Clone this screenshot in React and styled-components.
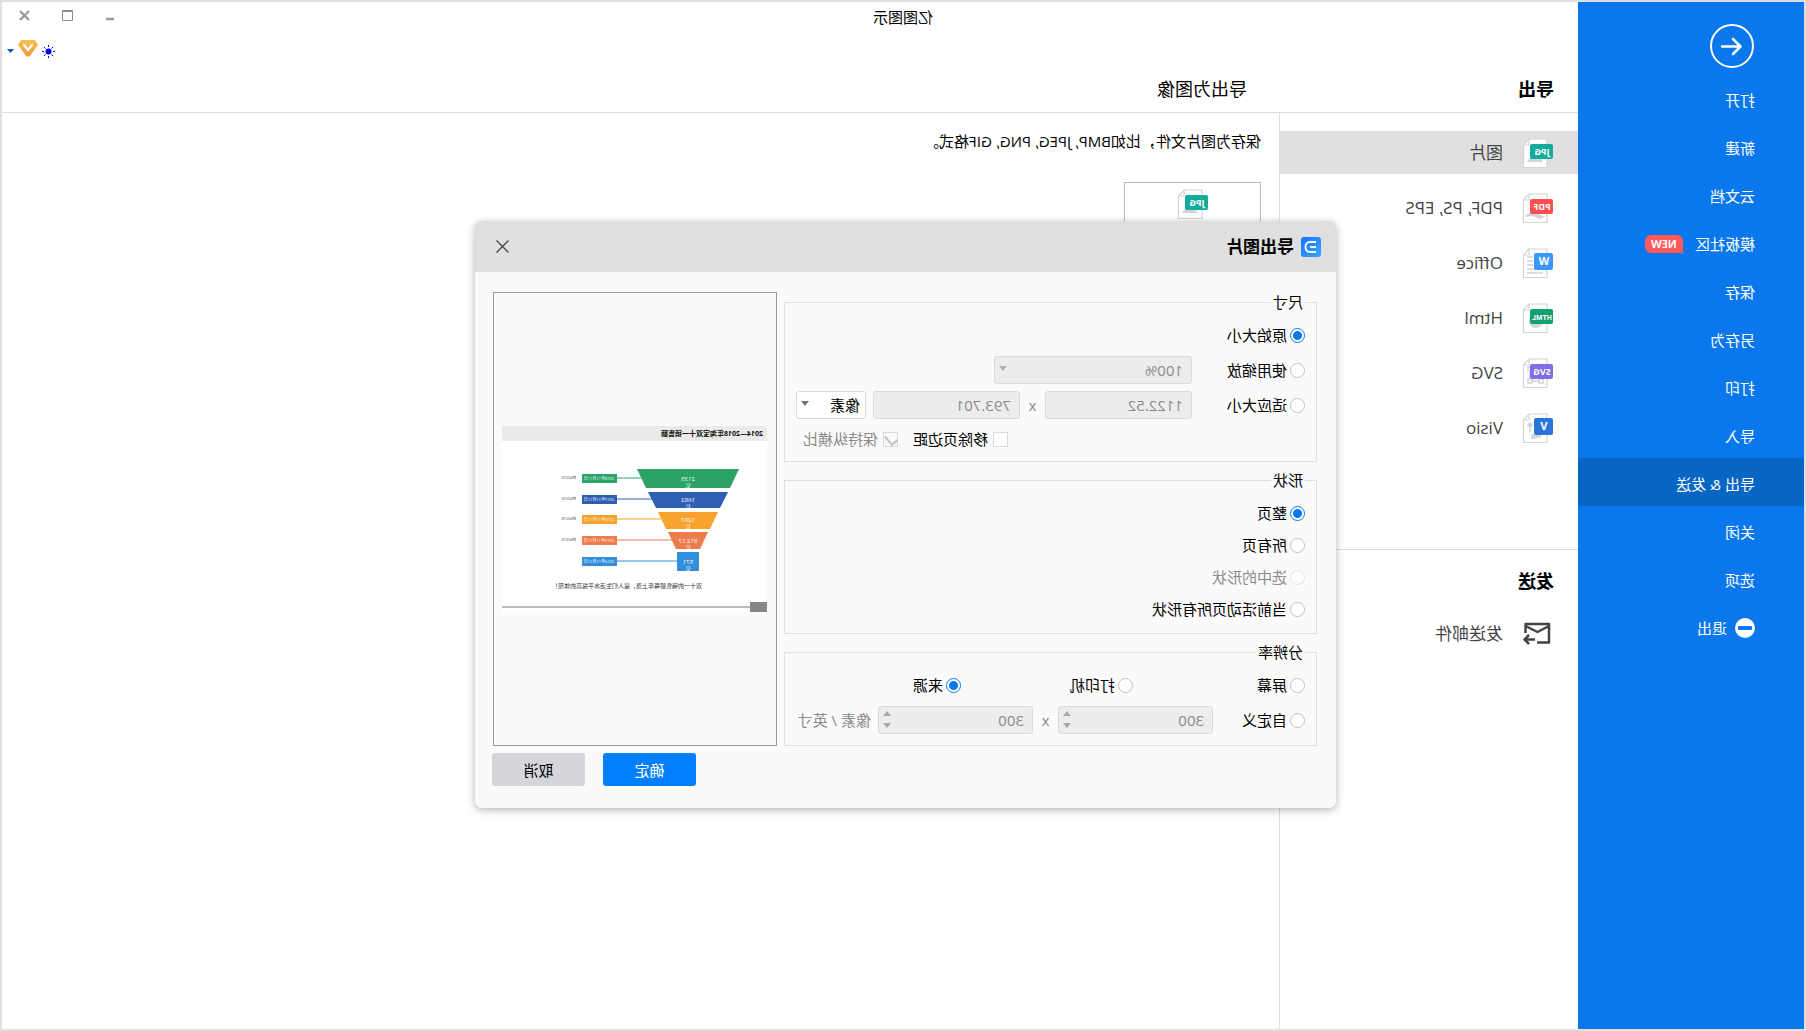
import React, { useState } from "react";
import styled, { createGlobalStyle, css } from "styled-components";

const navItems = [
  { name: "打开" },
  { name: "新建" },
  { name: "云文档" },
  { name: "模板社区", badge: "NEW" },
  { name: "保存" },
  { name: "另存为" },
  { name: "打印" },
  { name: "导入" },
  { name: "导出 & 发送", active: true },
  { name: "关闭" },
  { name: "选项" },
  { name: "退出", exit: true },
];

const exportTypes = [
  { name: "图片", tag: "JPG", color: "#14ab9c", active: true },
  { name: "PDF, PS, EPS", tag: "PDF", color: "#ff4d52" },
  { name: "Office", tag: "W", color: "#3b97ff" },
  { name: "Html", tag: "HTML", color: "#12a073" },
  { name: "SVG", tag: "SVG", color: "#7f6ee6" },
  { name: "Visio", tag: "V", color: "#2b75d9" },
];

const funnel = [
  { value: "2135", date: "2018年11月11日", rate: "增长26.9%", color: "#2ba368", points: "28,43 130,43 121,62 37,62", y: 52, to: 126 },
  { value: "1682", date: "2017年11月11日", rate: "增长39.3%", color: "#2f5fb5", points: "39,66 119,66 111,82 47,82", y: 73, to: 115 },
  { value: "1207", date: "2016年11月11日", rate: "增长32.3%", color: "#f8a22f", points: "49,86 109,86 101,103 57,103", y: 93, to: 106 },
  { value: "912.17", date: "2015年11月11日", rate: "增长59.7%", color: "#ef7c4c", points: "59,106 99,106 91,123 67,123", y: 114, to: 95 },
  { value: "571", date: "2014年11月11日", rate: "", color: "#338fdb", points: "68,126 90,126 90,145 68,145", y: 135, to: 90 },
];

const docInner = {
  JPG: <path d="M10 24l6-8 4 4 2-2 4 6z" fill="#d4d4d4" />,
  PDF: <path d="M11 24c4-1 7-6 9-9 1 5 3 7 7 8-5-2-9-1-13 2z" fill="#d4d4d4" stroke="#d4d4d4" strokeWidth="2" />,
  W: <path d="M20 9h6M20 13h6M20 17h6M10 21h16M10 25h16" stroke="#d4d4d4" strokeWidth="1.6" />,
  HTML: <circle cx="17" cy="18" r="7" fill="#d4d4d4" />,
  SVG: (
    <g fill="none" stroke="#d4d4d4" strokeWidth="1.4">
      <path d="M12 11h11v12H12z" />
      <path d="M10 21h4v4h-4zM21 21h4v4h-4zM21 9h4v4h-4z" fill="#fff" />
    </g>
  ),
  V: <path d="M13 20v4h7M23 11v8M21 12l2-2 2 2-2 2zM17 22h4v3h-4z" fill="#d4d4d4" stroke="#d4d4d4" strokeWidth="1.6" />,
};

const DocIcon = ({ tag, color }) => {
  const short = tag.length === 1;
  return (
    <svg width="31" height="30" viewBox="0 0 31 30">
      <path d="M6 1h18l5.500 6v22.500H6z" fill="#fff" stroke="#d4d4d4" strokeWidth="1.2" />
      <path d="M24 1v6h5.500" fill="none" stroke="#d4d4d4" strokeWidth="1.2" />
      {docInner[tag]}
      <rect x="0" y={short ? 5 : 6} width={short ? 19 : 23} height={short ? 17 : 15} rx="2" fill={color} />
      <text
        x={short ? 9 : 11}
        y="17"
        textAnchor="middle"
        fill="#fff"
        fontWeight="700"
        fontSize={short ? 11 : tag.length === 4 ? 7 : 9}
      >
        {tag}
      </text>
    </svg>
  );
};

const FunnelPreview = () => (
  <svg viewBox="0 0 265 187" width="100%">
    <rect width="265" height="187" fill="#fff" />
    <rect width="265" height="15" fill="#eaeaea" />
    <text x="4" y="10" fontSize="7" fontWeight="700" fill="#111">
      2014—2018年淘宝双十一销售额
    </text>
    {funnel.map((item) => (
      <g key={item.value}>
        <path d={`M${item.to} ${item.y}H152`} stroke={item.color} strokeWidth="1" />
        <polygon points={item.points} fill={item.color} />
        <text x="79" y={item.y + 3} fontSize="6" fill="#fff" textAnchor="middle">
          {item.value}
        </text>
        <text x="79" y={item.y + 9} fontSize="5" fill="#fff" textAnchor="middle">
          亿
        </text>
        <rect x="150" y={item.y - 4} width="35" height="9" fill={item.color} />
        <text x="168" y={item.y + 2} fontSize="4" fill="#fff" textAnchor="middle">
          {item.date}
        </text>
        <text x="191" y={item.y + 1} fontSize="3" fill="#333">
          {item.rate}
        </text>
      </g>
    ))}
    <text x="65" y="162" fontSize="6" fill="#333">
      双十一的销售额每年上涨，是人们生活水平提高的体现！
    </text>
    <path d="M17 181h248" stroke="#bcbcbc" strokeWidth="2" />
    <rect y="176" width="17" height="10" fill="#868686" />
  </svg>
);

const Choice = ({ type = "radio", group, label, width, checked, disabled, onChange }) => (
  <ChoiceLabel $width={width} $disabled={disabled} $box={type === "checkbox"}>
    <Mark
      type={type}
      name={group}
      checked={checked}
      disabled={disabled}
      onChange={onChange}
    />
    {label}
  </ChoiceLabel>
);

const Spinner = ({ label }) => (
  <SpinBox>
    <SpinInput aria-label={label} defaultValue="300" disabled />
    <SpinButtons>
      <SpinButton aria-label="增加" disabled>
        <svg width="8" height="5"><path d="M4 0l4 5H0z" fill="#a8a8a8" /></svg>
      </SpinButton>
      <SpinButton aria-label="减少" disabled>
        <svg width="8" height="5"><path d="M4 5l4-5H0z" fill="#a8a8a8" /></svg>
      </SpinButton>
    </SpinButtons>
  </SpinBox>
);

const App = () => {
  const [size, setSize] = useState("原始大小");
  const [shape, setShape] = useState("整页");
  const [dpi, setDpi] = useState("来源");
  const [noMargin, setNoMargin] = useState(false);

  const sizeChoice = (name) => (
    <Choice group="size" label={name} width={113} checked={size === name} onChange={() => setSize(name)} />
  );
  const dpiChoice = (name, width) => (
    <Choice group="dpi" label={name} width={width} checked={dpi === name} onChange={() => setDpi(name)} />
  );

  return (
    <Window>
      <GlobalStyle />
      <Sidebar>
        <BackButton aria-label="返回">
          <svg width="44" height="44" viewBox="0 0 44 44" fill="none" stroke="#fff">
            <circle cx="22" cy="22" r="21" strokeWidth="2" />
            <path d="M32 22.500H13.500M21 15l-7.500 7.500L21 30" strokeWidth="2.500" strokeLinecap="round" strokeLinejoin="round" />
          </svg>
        </BackButton>
        {navItems.map((item) => (
          <NavItem key={item.name} $active={item.active}>
            {item.exit && (
              <svg width="20" height="20" viewBox="0 0 20 20">
                <circle cx="10" cy="10" r="10" fill="#fff" />
                <rect x="3" y="8" width="14" height="4" rx="1" fill="#0a78ec" />
              </svg>
            )}
            {item.name}
            {item.badge && <Badge>{item.badge}</Badge>}
          </NavItem>
        ))}
      </Sidebar>

      <Main>
        <TitleBar>
          <AppTitle>亿图图示</AppTitle>
          <Controls>
            <ControlButton aria-label="最小化">
              <svg width="11" height="11"><path d="M2 9h8" stroke="#999" strokeWidth="2.500" /></svg>
            </ControlButton>
            <ControlButton aria-label="最大化">
              <svg width="11" height="11">
                <path d="M.5 .5h10v10H.5zM0 1.500h11" fill="none" stroke="#8c8c8c" />
              </svg>
            </ControlButton>
            <ControlButton aria-label="关闭窗口">
              <svg width="11" height="11"><path d="M1 1l9 9M10 1l-9 9" stroke="#999" strokeWidth="2.200" /></svg>
            </ControlButton>
          </Controls>
        </TitleBar>
        <Account>
          <Sun width="13" height="13" viewBox="0 0 13 13">
            <circle cx="6.500" cy="6.500" r="3" fill="#00f" />
            <path d="M6.500 0v2M6.500 11v2M0 6.500h2M11 6.500h2M2 2l1.500 1.500M9.500 9.500L11 11M11 2L9.500 3.500M3.500 9.500L2 11" stroke="#00f" />
          </Sun>
          <svg width="20" height="17" viewBox="0 0 20 17">
            <defs>
              <linearGradient id="vip" x2="0" y2="1">
                <stop stopColor="#fbc04c" />
                <stop offset="1" stopColor="#e79c3f" />
              </linearGradient>
            </defs>
            <path d="M3 0h14l3 5-8.500 11.500h-3L0 5z" fill="url(#vip)" />
            <path d="M6 5l4 5 4-5" fill="none" stroke="#fff" strokeWidth="2.200" strokeLinecap="round" />
          </svg>
          <Caret width="7" height="4"><path d="M0 0h7L3.500 4z" fill="#0a5cb0" /></Caret>
        </Account>
        <Headings>
          <SideHeading>导出</SideHeading>
          <PageHeading>导出为图像</PageHeading>
        </Headings>
        <Columns>
          <TypePanel>
            <TypeList>
              {exportTypes.map((item) => (
                <TypeItem key={item.name} $active={item.active}>
                  <DocIcon tag={item.tag} color={item.color} />
                  {item.name}
                </TypeItem>
              ))}
            </TypeList>
            <SendSection>
              <SendHeading>发送</SendHeading>
              <TypeItem>
                <svg width="31" height="30" viewBox="0 0 31 30" fill="none" stroke="#444" strokeWidth="2.500" strokeLinejoin="round">
                  <path d="M16 23.500H4V5h23.500v9" />
                  <path d="M4 7l11.500 6 12-6" />
                  <path d="M18 20.500h10M24 16l4.500 4.500L24 25" />
                </svg>
                发送邮件
              </TypeItem>
            </SendSection>
          </TypePanel>
          <Content>
            <Hint>保存为图片文件，比如BMP, JPEG, PNG, GIF格式。</Hint>
            <FormatCard aria-label="JPG">
              <DocIcon tag="JPG" color="#14ab9c" />
            </FormatCard>
          </Content>
        </Columns>
      </Main>

      <Overlay>
        <Dialog role="dialog" aria-label="导出图片">
          <DialogHeader>
            <svg width="20" height="20" viewBox="0 0 20 20">
              <defs>
                <linearGradient id="logo" x1="1" x2="0" y2="1">
                  <stop stopColor="#1673ff" />
                  <stop offset="1" stopColor="#3ba4ff" />
                </linearGradient>
              </defs>
              <rect width="20" height="20" rx="3" fill="url(#logo)" />
              <path d="M5 5h6c6 0 6 10 0 10H5M5 10h6" fill="none" stroke="#fff" strokeWidth="2" />
            </svg>
            <DialogTitle>导出图片</DialogTitle>
            <CloseButton aria-label="关闭">
              <svg width="13" height="13"><path d="M.5 .5l12 12M12.500 .5l-12 12" stroke="#444" strokeWidth="1.300" /></svg>
            </CloseButton>
          </DialogHeader>
          <DialogBody>
            <Groups>
              <Group $gap={7} $bottom={7}>
                <legend>尺寸</legend>
                <Row>{sizeChoice("原始大小")}</Row>
                <Row>
                  {sizeChoice("使用缩放")}
                  <SelectBox $width={198} $disabled>
                    <select aria-label="缩放" disabled>
                      <option>100%</option>
                    </select>
                  </SelectBox>
                </Row>
                <Row>
                  {sizeChoice("适应大小")}
                  <Field aria-label="宽度" defaultValue="1122.52" disabled />
                  <Times>x</Times>
                  <Field aria-label="高度" defaultValue="793.701" disabled />
                  <UnitBox $width={70}>
                    <select aria-label="单位">
                      <option>像素</option>
                    </select>
                  </UnitBox>
                </Row>
                <CheckRow>
                  <Choice type="checkbox" label="移除页边距" checked={noMargin} onChange={() => setNoMargin(!noMargin)} />
                  <Choice type="checkbox" label="保持纵横比" checked disabled onChange={() => {}} />
                </CheckRow>
              </Group>
              <Group $gap={4} $bottom={10}>
                <legend>形状</legend>
                {["整页", "所有页", "选中的形状", "当前活动页所有形状"].map((name) => (
                  <Row key={name}>
                    <Choice
                      group="shape"
                      label={name}
                      checked={shape === name}
                      disabled={name === "选中的形状"}
                      onChange={() => setShape(name)}
                    />
                  </Row>
                ))}
              </Group>
              <Group $gap={7} $bottom={11}>
                <legend>分辨率</legend>
                <Row>
                  {dpiChoice("屏幕", 172)}
                  {dpiChoice("打印机", 172)}
                  {dpiChoice("来源")}
                </Row>
                <Row>
                  {dpiChoice("自定义", 92)}
                  <Spinner label="水平分辨率" />
                  <Times>x</Times>
                  <Spinner label="垂直分辨率" />
                  <Unit>像素 / 英寸</Unit>
                </Row>
              </Group>
            </Groups>
            <Preview>
              <FunnelPreview />
            </Preview>
          </DialogBody>
          <DialogFooter>
            <Button $primary>确定</Button>
            <Button>取消</Button>
          </DialogFooter>
        </Dialog>
      </Overlay>
    </Window>
  );
};

export default App;

const GlobalStyle = createGlobalStyle`
  * {
    box-sizing: border-box;
  }
  body {
    margin: 0;
    background: #e0e0e0;
  }
  body, button, input, select {
    font-family: "Open Sans", "Noto Sans CJK SC", sans-serif;
    font-size: 15px;
    line-height: 20px;
    color: #000;
  }
  button {
    padding: 0;
    border: 0;
    background: none;
    cursor: pointer;
  }
  svg {
    flex: none;
    display: block;
  }
`;
/* the whole window is shown mirrored */
const Window = styled.div`
  position: relative;
  display: flex;
  min-height: 100vh;
  border: 2px solid #e0e0e0;
  background: #fff;
  transform: scaleX(-1);
`;
const Sidebar = styled.nav`
  flex: none;
  display: flex;
  flex-direction: column;
  width: 226px;
  padding-top: 22px;
  background: #0a78ec;
`;
const BackButton = styled.button`
  width: 44px;
  height: 44px;
  margin: 0 0 6px 50px;
`;
const NavItem = styled.button`
  display: flex;
  align-items: center;
  gap: 8px;
  height: 48px;
  padding: 3px 0 0 49px;
  color: #fff;
  background: ${(p) => (p.$active ? "#0765c4" : "none")};
`;
const Badge = styled.span`
  width: 38px;
  height: 18px;
  margin-left: 4px;
  border-radius: 6px 6px 6px 0;
  background: #ff5a5a;
  font-size: 11px;
  font-weight: 700;
  line-height: 18px;
  text-align: center;
`;
const Main = styled.main`
  flex: 1;
  min-width: 0;
  display: flex;
  flex-direction: column;
`;
const TitleBar = styled.header`
  display: grid;
  grid-template-columns: 1fr auto 1fr 226px;
  align-items: center;
  height: 30px;
`;
const AppTitle = styled.div`
  grid-column: 2;
`;
const Controls = styled.div`
  grid-column: 3 / 5;
  grid-row: 1;
  justify-self: end;
  display: flex;
  padding: 0 1px 4px 0;
`;
const ControlButton = styled.button`
  display: flex;
  align-items: center;
  justify-content: center;
  width: 43px;
  height: 26px;
`;
const Account = styled.div`
  display: flex;
  align-items: center;
  justify-content: flex-end;
  gap: 4px;
  height: 33px;
  padding-right: 5px;
`;
const Sun = styled.svg`
  margin-top: 6px;
`;
const Caret = styled.svg`
  margin-top: 4px;
`;
const Headings = styled.div`
  display: flex;
  align-items: center;
  height: 48px;
  border-bottom: 1px solid #dedede;
`;
const SideHeading = styled.h2`
  width: 299px;
  margin: 0;
  padding-left: 24px;
  font-size: 18px;
`;
const PageHeading = styled.h1`
  margin: 0;
  padding-left: 32px;
  font-size: 18px;
  font-weight: 400;
`;
const Columns = styled.div`
  flex: 1;
  display: flex;
`;
const TypePanel = styled.aside`
  flex: none;
  width: 299px;
  border-right: 1px solid #dedede;
`;
const TypeList = styled.div`
  display: flex;
  flex-direction: column;
  gap: 12px;
  padding: 18px 0 100px;
`;
const TypeItem = styled.button`
  display: flex;
  align-items: center;
  gap: 19px;
  width: 100%;
  height: 43px;
  padding: 0 0 0 25px;
  font-size: 17px;
  color: #444;
  background: ${(p) => (p.$active ? "#e0e0e0" : "none")};
`;
const SendSection = styled.section`
  border-top: 1px solid #dedede;
`;
const SendHeading = styled.h2`
  margin: 21px 0;
  padding-left: 24px;
  font-size: 18px;
`;
const Content = styled.section`
  flex: 1;
  padding: 18px;
`;
const Hint = styled.p`
  margin: 0 0 31px;
`;
const FormatCard = styled.button`
  display: flex;
  justify-content: center;
  width: 137px;
  height: 90px;
  padding-top: 6px;
  border: 1px solid #bcbcbc;
`;
const Overlay = styled.div`
  position: absolute;
  inset: 0;
  display: grid;
  place-items: center;
  padding: 0 5px 2px 0;
`;
const Dialog = styled.section`
  width: 861px;
  max-width: 100%;
  border-radius: 7px;
  background: #fafafa;
  box-shadow: 0 2px 8px rgba(0, 0, 0, 0.3);
`;
const DialogHeader = styled.header`
  display: flex;
  align-items: center;
  gap: 7px;
  height: 51px;
  padding: 0 12px 0 15px;
  border-radius: 7px 7px 0 0;
  background: #dfdfdf;
`;
const DialogTitle = styled.h2`
  flex: 1;
  margin: 0;
  font-size: 17px;
`;
const CloseButton = styled.button`
  display: flex;
  align-items: center;
  justify-content: center;
  width: 32px;
  height: 32px;
`;
const DialogBody = styled.div`
  display: grid;
  grid-template-columns: minmax(0, 1fr) 284px;
  gap: 7px;
  padding: 20px 18px 7px 19px;
`;
const Groups = styled.div`
  display: flex;
  flex-direction: column;
  gap: 8px;
`;
const Group = styled.fieldset`
  min-width: 0;
  margin: 0;
  padding: 9px 10px ${(p) => p.$bottom}px 11px;
  border: 1px solid #dfdfdf;

  legend {
    padding: 0 2px;
  }
  > div + div {
    margin-top: ${(p) => p.$gap}px;
  }
`;
const Row = styled.div`
  display: flex;
  align-items: center;
  height: 28px;
`;
const CheckRow = styled(Row)`
  justify-content: flex-end;
  gap: 15px;
  padding: 0 8px 2px 0;
`;
const ChoiceLabel = styled.label`
  display: flex;
  align-items: center;
  gap: ${(p) => (p.$box ? 5 : 3)}px;
  width: ${(p) => (p.$width ? `${p.$width}px` : "auto")};
  color: ${(p) => (p.$disabled ? "#8a8a8a" : "#000")};
`;
const Mark = styled.input`
  appearance: none;
  flex: none;
  width: 15px;
  height: 15px;
  margin: 0;
  border: 1px solid #c2c2c2;
  background: #fff;

  &[type="radio"] {
    border-radius: 50%;
  }
  &[type="radio"]:checked {
    border-color: #0a78ec;
    background: radial-gradient(circle, #0a78ec 4px, #fff 5px);
  }
  &[type="radio"]:disabled {
    border-color: #e2e2e2;
  }
  &[type="checkbox"] {
    border-color: #dadada;
  }
  &[type="checkbox"]:checked {
    display: grid;
    place-items: center;
    background: #fafafa;
  }
  &[type="checkbox"]:checked::before {
    content: "";
    width: 6px;
    height: 10px;
    border: solid #c2c2c2;
    border-width: 0 2px 2px 0;
    transform: rotate(40deg);
  }
`;
const fieldStyle = css`
  height: 28px;
  padding: 0 8px;
  border: 1px solid #dadada;
  border-radius: 3px;
  background: #ededed;
  color: #8a8a8a;
`;
const Field = styled.input`
  ${fieldStyle}
  width: 147px;
`;
const Times = styled.span`
  width: 25px;
  text-align: center;
  color: #8a8a8a;
`;
const SelectBox = styled.span`
  display: grid;
  align-items: center;
  width: ${(p) => p.$width}px;

  select {
    ${fieldStyle}
    grid-area: 1 / 1;
    appearance: none;
    opacity: 1;
    ${(p) => !p.$disabled && "background: #fff; color: #000; padding: 0 5px;"}
  }
  &::after {
    content: "";
    grid-area: 1 / 1;
    justify-self: end;
    margin: 0 5px 3px 0;
    border: 4px solid transparent;
    border-top: 5px solid ${(p) => (p.$disabled ? "#b0b0b0" : "#777")};
    border-bottom: 0;
    pointer-events: none;
  }
`;
const UnitBox = styled(SelectBox)`
  margin-left: 7px;
`;
const SpinBox = styled.span`
  ${fieldStyle}
  display: flex;
  width: 155px;
  padding: 0 4px 0 8px;
`;
const SpinInput = styled.input`
  flex: 1;
  min-width: 0;
  padding: 0;
  border: 0;
  background: none;
  color: #8a8a8a;
`;
const SpinButtons = styled.span`
  display: flex;
  flex-direction: column;
  justify-content: space-between;
  padding: 4px 0 5px;
`;
const SpinButton = styled.button`
  width: 8px;
  height: 5px;
`;
const Unit = styled.span`
  margin-left: 7px;
  color: #8a8a8a;
`;
const Preview = styled.div`
  display: flex;
  align-items: center;
  padding: 0 8px 0 9px;
  border: 1px solid #999;
`;
const DialogFooter = styled.footer`
  display: flex;
  justify-content: flex-end;
  gap: 18px;
  padding: 0 17px 22px;
`;
const Button = styled.button`
  width: 93px;
  height: 33px;
  border-radius: 3px;
  background: ${(p) => (p.$primary ? "#0080ff" : "#d5d6da")};
  color: ${(p) => (p.$primary ? "#fff" : "#000")};
`;
